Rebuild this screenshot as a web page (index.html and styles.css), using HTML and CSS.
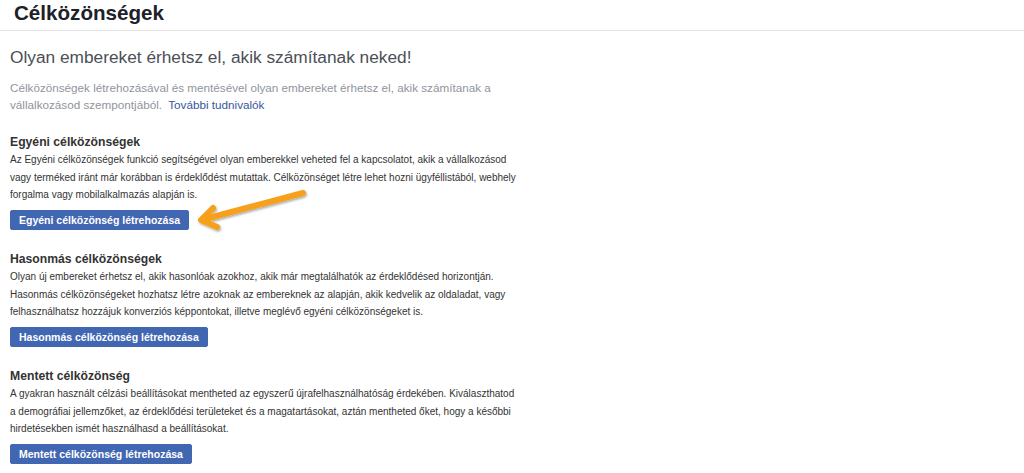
FILE: index.html
```html
<!DOCTYPE html>
<html lang="hu">
<head>
    <meta charset="UTF-8">
    <meta name="viewport" content="width=device-width, initial-scale=1.0">
    <title>Célközönségek</title>
    <link rel="stylesheet" href="styles.css">
</head>
<body>
    <div class="topbar">
        <h1>Célközönségek</h1>
    </div>
    <div class="content">
        <h2 class="intro-title">Olyan embereket érhetsz el, akik számítanak neked!</h2>
        <p class="intro-text">
            Célközönségek létrehozásával és mentésével olyan embereket érhetsz el, akik számítanak a vállalkozásod szempontjából.
            <a href="#">További tudnivalók</a>
        </p>

        <div class="section">
            <h3>Egyéni célközönségek</h3>
            <p>Az Egyéni célközönségek funkció segítségével olyan emberekkel veheted fel a kapcsolatot, akik a vállalkozásod vagy terméked iránt már korábban is érdeklődést mutattak. Célközönséget létre lehet hozni ügyféllistából, webhely forgalma vagy mobilalkalmazás alapján is.</p>
            <button class="button">Egyéni célközönség létrehozása</button>
        </div>

        <div class="section">
            <h3>Hasonmás célközönségek</h3>
            <p>Olyan új embereket érhetsz el, akik hasonlóak azokhoz, akik már megtalálhatók az érdeklődésed horizontján. Hasonmás célközönségeket hozhatsz létre azoknak az embereknek az alapján, akik kedvelik az oldaladat, vagy felhasználhatsz hozzájuk konverziós képpontokat, illetve meglévő egyéni célközönségeket is.</p>
            <button class="button">Hasonmás célközönség létrehozása</button>
        </div>

        <div class="section">
            <h3>Mentett célközönség</h3>
            <p>A gyakran használt célzási beállításokat mentheted az egyszerű újrafelhasználhatóság érdekében. Kiválaszthatod a demográfiai jellemzőket, az érdeklődési területeket és a magatartásokat, aztán mentheted őket, hogy a későbbi hirdetésekben ismét használhasd a beállításokat.</p>
            <button class="button">Mentett célközönség létrehozása</button>
        </div>
    </div>

    <!-- highlight arrow pointing at the first button -->
    <svg class="arrow" width="130" height="55" viewBox="0 0 130 55">
        <defs>
            <filter id="shadow" x="-20%" y="-40%" width="140%" height="180%">
                <feDropShadow dx="1" dy="1.5" stdDeviation="1.2" flood-color="#000" flood-opacity="0.35"/>
            </filter>
        </defs>
        <g filter="url(#shadow)" fill="none" stroke="#f7a01a" stroke-width="6" stroke-linecap="round" stroke-linejoin="round">
            <path d="M113 13 L15 39"/>
            <path d="M23 28 L11 40 L27 47"/>
        </g>
    </svg>
</body>
</html>
```

FILE: styles.css
```css
body {
    font-family: "Liberation Sans", Arial, sans-serif;
    margin: 0;
    padding: 0;
    background-color: #fff;
    color: #333;
}
.topbar {
    height: 31px;
    box-sizing: border-box;
    padding: 2px 0 0 14px;
    border-bottom: 1px solid #e3e3e3;
}
.topbar h1 {
    margin: 0;
    font-size: 20.6px;
    line-height: 21px;
    font-weight: bold;
    color: #1d2129;
}
.content {
    width: 510px;
    padding: 16px 0 0 10px;
}
.intro-title {
    margin: 0;
    font-size: 17.3px;
    line-height: 20px;
    font-weight: normal;
    color: #4b4f56;
}
.intro-text {
    margin: 11.5px 0 0;
    font-size: 11.7px;
    line-height: 17px;
    color: #90949c;
}
.intro-text a {
    margin-left: 3px;
    color: #365899;
    text-decoration: none;
}
.section {
    margin-top: 20.5px;
}
.section h3 {
    margin: 0;
    font-size: 12.2px;
    line-height: 18px;
    font-weight: bold;
    color: #333;
}
.section p {
    margin: 0;
    font-size: 10px;
    line-height: 17.5px;
    color: #333;
}
.button {
    display: block;
    margin-top: 6px;
    height: 20px;
    padding: 0 8px;
    font-family: inherit;
    font-size: 10.5px;
    font-weight: bold;
    color: #fff;
    background-color: #4267b2;
    border: 1px solid #4267b2;
    border-radius: 2px;
    cursor: pointer;
}
.arrow {
    position: absolute;
    left: 190px;
    top: 180px;
}
```
